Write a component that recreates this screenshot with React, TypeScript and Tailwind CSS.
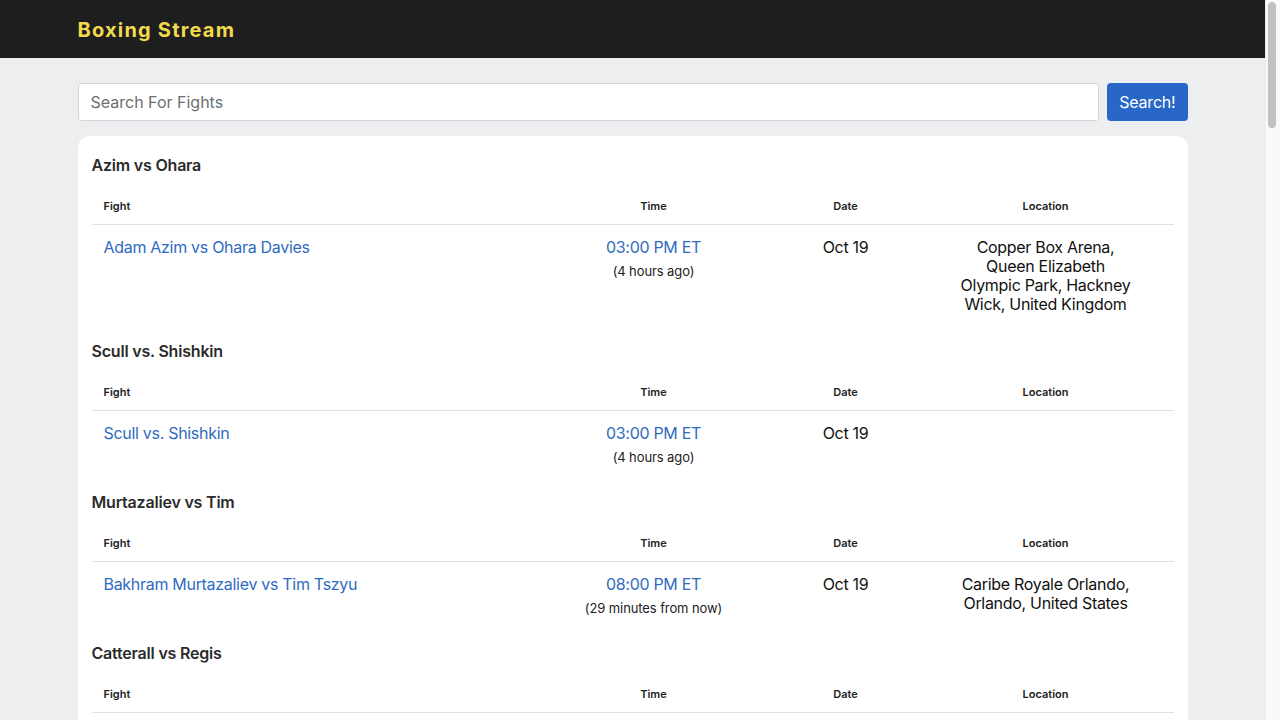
import React from "react";

type Fight = {
  title: string;
  name: string;
  time: string;
  rel: string;
  date: string;
  location: string;
};

const fights: Fight[] = [
  { title: "Azim vs Ohara", name: "Adam Azim vs Ohara Davies", time: "03:00 PM ET", rel: "(4 hours ago)", date: "Oct 19", location: "Copper Box Arena, Queen Elizabeth Olympic Park, Hackney Wick, United Kingdom" },
  { title: "Scull vs. Shishkin", name: "Scull vs. Shishkin", time: "03:00 PM ET", rel: "(4 hours ago)", date: "Oct 19", location: "" },
  { title: "Murtazaliev vs Tim", name: "Bakhram Murtazaliev vs Tim Tszyu", time: "08:00 PM ET", rel: "(29 minutes from now)", date: "Oct 19", location: "Caribe Royale Orlando, Orlando, United States" },
  { title: "Catterall vs Regis", name: "Jack Catterall vs Regis Prograis", time: "02:00 PM ET", rel: "(1 day from now)", date: "Oct 26", location: "Co-op Live, Manchester, United Kingdom" },
  { title: "Beterbiev vs Bivol", name: "Artur Beterbiev vs Dmitry Bivol", time: "02:00 PM ET", rel: "(6 days from now)", date: "Oct 12", location: "Kingdom Arena, Riyadh, Saudi Arabia" },
  { title: "Zepeda vs Farmer", name: "William Zepeda vs Tevin Farmer", time: "09:00 PM ET", rel: "(8 days from now)", date: "Oct 27", location: "Arena CDMX, Mexico City, Mexico" },
  { title: "Ramirez vs Billam-Smith", name: "Gilberto Ramirez vs Chris Billam-Smith", time: "08:00 PM ET", rel: "(2 weeks from now)", date: "Nov 16", location: "Kia Forum, Inglewood, United States" },
  { title: "Paul vs Tyson", name: "Jake Paul vs Mike Tyson", time: "08:00 PM ET", rel: "(4 weeks from now)", date: "Nov 15", location: "AT&T Stadium, Arlington, United States" },
  { title: "Taylor vs Serrano", name: "Katie Taylor vs Amanda Serrano", time: "08:00 PM ET", rel: "(4 weeks from now)", date: "Nov 15", location: "AT&T Stadium, Arlington, United States" },
  { title: "Lopez vs Ortiz", name: "Teofimo Lopez vs Jamaine Ortiz", time: "09:00 PM ET", rel: "(1 month from now)", date: "Nov 23", location: "Madison Square Garden, New York, United States" },
  { title: "Inoue vs Goodman", name: "Naoya Inoue vs Sam Goodman", time: "05:00 AM ET", rel: "(2 months from now)", date: "Dec 24", location: "Ariake Arena, Tokyo, Japan" },
  { title: "Usyk vs Fury", name: "Oleksandr Usyk vs Tyson Fury", time: "03:00 PM ET", rel: "(2 months from now)", date: "Dec 21", location: "Kingdom Arena, Riyadh, Saudi Arabia" },
];

function Section({ f }: { f: Fight }) {
  return (
    <div className="mb-[9px]">
      <h3 className="text-[16px] leading-[28px] font-semibold tracking-[-0.2px] text-[#2b2b2b] mb-[9px]">{f.title}</h3>
      <div className="grid grid-cols-[443px_238px_146px_254px] border-b border-[#dee2e6] pt-[11px] pb-[11px] text-[11px] leading-[14px] font-semibold text-[#222]">
        <div className="px-3">Fight</div>
        <div className="text-center">Time</div>
        <div className="text-center">Date</div>
        <div className="text-center">Location</div>
      </div>
      <div className="grid grid-cols-[443px_238px_146px_254px] pt-[13px] pb-[12px] text-[16px] leading-[19px] tracking-[-0.3px]">
        <div className="px-3">
          <a className="text-[#2f6bbf]">{f.name}</a>
        </div>
        <div className="text-center">
          <div className="text-[#2f6bbf]">{f.time}</div>
          <div className="text-[13px] mt-[5px] tracking-[-0.1px] text-[#222]">{f.rel}</div>
        </div>
        <div className="text-center text-[#111]">{f.date}</div>
        <div className="text-center text-[#111] pb-[2px]">
          <div className="max-w-[174px] mx-auto">{f.location}</div>
        </div>
      </div>
    </div>
  );
}

export default function App() {
  return (
    <div className="h-screen flex overflow-hidden bg-[#eceef0]" style={{ fontFamily: "Inter, 'Noto Sans', sans-serif" }}>
      <div className="flex-1 min-w-0 overflow-hidden">
        <header className="bg-[#1e1e1e] h-[58px]">
          <div className="max-w-[1110px] mx-auto h-full flex items-center pt-[1px]">
            <span className="text-[#f2d94e] text-[20px] font-bold tracking-[1.2px]">Boxing Stream</span>
          </div>
        </header>
        <main className="max-w-[1110px] mx-auto pt-[25px] pb-10">
          <div className="flex gap-2 mb-[15px]">
            <input
              className="flex-1 h-[38px] bg-white border border-[#d4d6d9] rounded-[3px] px-3 text-[16px] text-[#333] placeholder:text-[#6c6f73] outline-none"
              placeholder="Search For Fights"
            />
            <button className="h-[38px] px-[12px] bg-[#2866c8] text-white text-[16px] tracking-[-0.2px] rounded-[4px]">Search!</button>
          </div>
          <div className="bg-white rounded-[12px] px-[14px] pt-[15px] pb-[14px]">
            {fights.map((f, i) => (
              <Section key={i} f={f} />
            ))}
          </div>
        </main>
      </div>
      <div className="w-[15px] shrink-0 bg-[#fafafa] border-l border-[#ebebeb]">
        <div className="mt-[2px] ml-[2px] w-[8px] h-[126px] rounded-full bg-[#c1c1c1]" />
      </div>
    </div>
  );
}
